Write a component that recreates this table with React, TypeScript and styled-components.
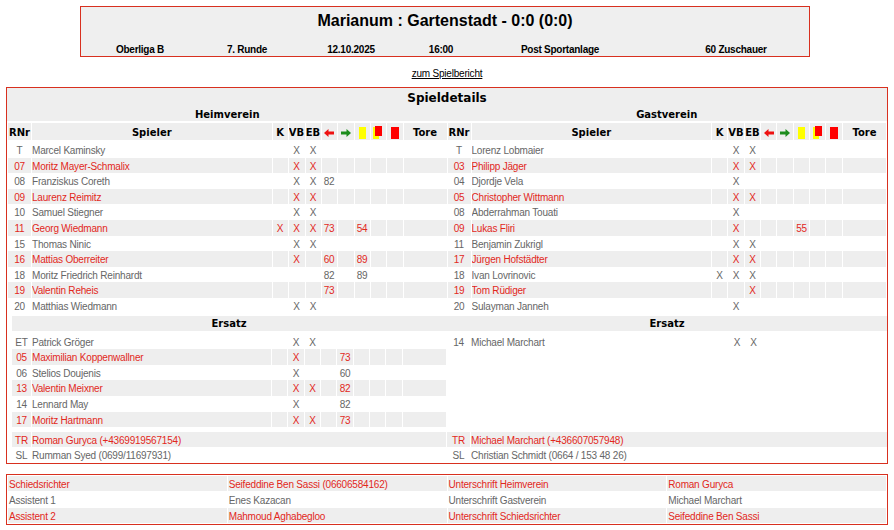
import React from "react";
import styled, { createGlobalStyle } from "styled-components";

const RED = "#e2281c";
const BORDER = "#d8301f";
const GREY_BG = "#eeeeee";
const GREY_TEXT = "#666666";

const GlobalStyle = createGlobalStyle`
  body {
    margin: 0;
    background: #fff;
    font-family: "Liberation Sans", Arial, sans-serif;
    font-size: 10px;
  }
`;

type Player = {
  nr: string;
  name: string;
  k?: boolean;
  vb?: boolean;
  eb?: boolean;
  out?: string;
  inn?: string;
  y?: string;
  yr?: string;
  r?: string;
  tore?: string;
};

const homeStart: Player[] = [
  { nr: "T", name: "Marcel Kaminsky", vb: true, eb: true },
  { nr: "07", name: "Moritz Mayer-Schmalix", vb: true, eb: true },
  { nr: "08", name: "Franziskus Coreth", vb: true, eb: true, out: "82" },
  { nr: "09", name: "Laurenz Reimitz", vb: true, eb: true },
  { nr: "10", name: "Samuel Stiegner", vb: true, eb: true },
  { nr: "11", name: "Georg Wiedmann", k: true, vb: true, eb: true, out: "73", y: "54" },
  { nr: "15", name: "Thomas Ninic", vb: true, eb: true },
  { nr: "16", name: "Mattias Oberreiter", vb: true, out: "60", y: "89" },
  { nr: "18", name: "Moritz Friedrich Reinhardt", out: "82", y: "89" },
  { nr: "19", name: "Valentin Reheis", out: "73" },
  { nr: "20", name: "Matthias Wiedmann", vb: true, eb: true },
];

const awayStart: Player[] = [
  { nr: "T", name: "Lorenz Lobmaier", vb: true, eb: true },
  { nr: "03", name: "Philipp Jäger", vb: true, eb: true },
  { nr: "04", name: "Djordje Vela", vb: true },
  { nr: "05", name: "Christopher Wittmann", vb: true, eb: true },
  { nr: "08", name: "Abderrahman Touati", vb: true },
  { nr: "09", name: "Lukas Fliri", vb: true, y: "55" },
  { nr: "11", name: "Benjamin Zukrigl", vb: true, eb: true },
  { nr: "17", name: "Jürgen Hofstädter", vb: true, eb: true },
  { nr: "18", name: "Ivan Lovrinovic", k: true, vb: true, eb: true },
  { nr: "19", name: "Tom Rüdiger", eb: true },
  { nr: "20", name: "Sulayman Janneh", vb: true },
];

const homeSubs: Player[] = [
  { nr: "ET", name: "Patrick Gröger", vb: true, eb: true },
  { nr: "05", name: "Maximilian Koppenwallner", vb: true, inn: "73" },
  { nr: "06", name: "Stelios Doujenis", vb: true, inn: "60" },
  { nr: "13", name: "Valentin Meixner", vb: true, eb: true, inn: "82" },
  { nr: "14", name: "Lennard May", vb: true, inn: "82" },
  { nr: "17", name: "Moritz Hartmann", vb: true, eb: true, inn: "73" },
];

const awaySubs: Player[] = [{ nr: "14", name: "Michael Marchart", vb: true, eb: true }];

const homeStaff = [
  { role: "TR", name: "Roman Guryca (+4369919567154)" },
  { role: "SL", name: "Rumman Syed (0699/11697931)" },
];
const awayStaff = [
  { role: "TR", name: "Michael Marchart (+436607057948)" },
  { role: "SL", name: "Christian Schmidt (0664 / 153 48 26)" },
];

const officials = [
  ["Schiedsrichter", "Seifeddine Ben Sassi (06606584162)", "Unterschrift Heimverein", "Roman Guryca"],
  ["Assistent 1", "Enes Kazacan", "Unterschrift Gastverein", "Michael Marchart"],
  ["Assistent 2", "Mahmoud Aghabegloo", "Unterschrift Schiedsrichter", "Seifeddine Ben Sassi"],
];

const columns = (rnr: number) =>
  `${rnr}px 1fr 15px 16px 15px 15px 16px 15px 15px 16px 43px`;

const Page = styled.div`
  padding: 6px 6px 0;
`;

const MatchHeader = styled.div`
  width: 728px;
  margin-left: 74px;
  border: 1px solid ${BORDER};
  background: #efefef;
  padding: 4px 0 0;
  display: grid;
  grid-template-rows: 20px 12px;
  row-gap: 13px;
`;

const MatchTitle = styled.h1`
  margin: 0;
  font-size: 16px;
  line-height: 20px;
  font-weight: bold;
  text-align: center;
  color: #000;
`;

const MatchInfo = styled.div`
  display: grid;
  grid-template-columns: 118px 96px 112px 68px 170px 1fr;
  font-weight: bold;
  line-height: 12px;
  letter-spacing: -0.25px;
  text-align: center;
  color: #000;
  & > span:last-child {
    padding-left: 18px;
  }
`;

const LinkLine = styled.div`
  margin: 11px 0 7px;
  line-height: 12px;
  text-align: center;
  letter-spacing: -0.2px;
  a {
    color: #000;
    text-decoration: underline;
  }
`;

const DetailsBox = styled.div`
  border: 1px solid ${BORDER};
  padding-bottom: 1px;
`;

const TitleBand = styled.div`
  background: ${GREY_BG};
  font-family: "DejaVu Sans", Verdana, sans-serif;
  font-weight: bold;
  color: #000;
`;

const BoxTitle = styled.div`
  height: 18px;
  line-height: 20px;
  font-size: 12px;
  text-align: center;
`;

const TeamNames = styled.div`
  display: grid;
  grid-template-columns: 1fr 1fr;
  column-gap: 1px;
  padding: 0 1px;
  height: 15px;
  line-height: 17px;
  font-size: 10px;
  text-align: center;
`;

const TeamGrid = styled.div<{ $inset?: boolean; $top: number }>`
  display: grid;
  grid-template-columns: ${(p) => (p.$inset ? "434px 1fr" : "1fr 1fr")};
  column-gap: 1px;
  margin: ${(p) => `${p.$top}px ${p.$inset ? 0 : 1}px 0 ${p.$inset ? 5 : 1}px`};
  align-items: start;
`;

const SubsBand = styled(TeamGrid)`
  background: ${GREY_BG};
  height: 15px;
  line-height: 15px;
  font-family: "DejaVu Sans", Verdana, sans-serif;
  font-weight: bold;
  text-align: center;
  color: #000;
`;

const Half = styled.div`
  display: flex;
  flex-direction: column;
`;

const HeadRow = styled.div<{ $rnr: number }>`
  display: grid;
  grid-template-columns: ${(p) => columns(p.$rnr)};
  column-gap: 1px;
  height: 17px;
  margin-bottom: 2px;
  font-family: "DejaVu Sans", Verdana, sans-serif;
  font-weight: bold;
  color: #000;
  & > span {
    display: flex;
    align-items: center;
    justify-content: center;
    box-sizing: border-box;
    padding-top: 2px;
    background: ${GREY_BG};
    white-space: nowrap;
    overflow: hidden;
  }
`;

const Row = styled.div<{ $alt: boolean; $cols: string; $h: number }>`
  display: grid;
  grid-template-columns: ${(p) => p.$cols};
  column-gap: 1px;
  height: ${(p) => p.$h}px;
  line-height: ${(p) => p.$h + 2}px;
  letter-spacing: -0.2px;
  color: ${(p) => (p.$alt ? RED : GREY_TEXT)};
  & > span {
    background: ${(p) => (p.$alt ? GREY_BG : "#fff")};
    text-align: center;
    white-space: nowrap;
    overflow: hidden;
  }
  & > span:nth-child(2) {
    text-align: left;
  }
`;

const Card = styled.span<{ $color: string; $w: number }>`
  display: inline-block;
  flex: none;
  width: ${(p) => p.$w}px;
  height: 12px;
  background: ${(p) => p.$color};
`;

const Officials = styled.div`
  margin-top: 10px;
  border: 1px solid ${BORDER};
  padding: 1px;
  display: grid;
  grid-template-columns: repeat(4, 1fr);
  gap: 1px;
`;

const OfficialCell = styled.div<{ $alt: boolean }>`
  height: 15px;
  line-height: 17px;
  padding-left: 1px;
  letter-spacing: -0.2px;
  background: ${(p) => (p.$alt ? GREY_BG : "#fff")};
  color: ${(p) => (p.$alt ? RED : GREY_TEXT)};
  white-space: nowrap;
  overflow: hidden;
`;

const Arrow = ({ dir }: { dir: "in" | "out" }) => (
  <svg width="10" height="8" viewBox="0 0 10 8">
    {dir === "out" ? (
      <path d="M0 4 L4.5 0 L4.5 2.5 L10 2.5 L10 5.5 L4.5 5.5 L4.5 8 Z" fill="#ee1111" />
    ) : (
      <path d="M10 4 L5.5 0 L5.5 2.5 L0 2.5 L0 5.5 L5.5 5.5 L5.5 8 Z" fill="#1c8c1c" />
    )}
  </svg>
);

const YellowRed = () => (
  <svg width="10" height="13" viewBox="0 0 10 13">
    <rect x="0" y="1" width="6" height="12" fill="#ffff00" />
    <rect x="2" y="0" width="7" height="10" fill="#ff0000" />
  </svg>
);

const LineupHead = ({ rnr }: { rnr: number }) => (
  <HeadRow $rnr={rnr}>
    <span>RNr</span>
    <span>Spieler</span>
    <span>K</span>
    <span>VB</span>
    <span>EB</span>
    <span><Arrow dir="out" /></span>
    <span><Arrow dir="in" /></span>
    <span><Card $color="#ffff00" $w={7} /></span>
    <span><YellowRed /></span>
    <span><Card $color="#ff0000" $w={8} /></span>
    <span>Tore</span>
  </HeadRow>
);

const PlayerRows = ({ players, rnr }: { players: Player[]; rnr: number }) => (
  <>
    {players.map((p, i) => (
      <Row key={p.nr + p.name} $alt={i % 2 === 1} $cols={columns(rnr)} $h={15.6}>
        <span>{p.nr}</span>
        <span>{p.name}</span>
        <span>{p.k ? "X" : ""}</span>
        <span>{p.vb ? "X" : ""}</span>
        <span>{p.eb ? "X" : ""}</span>
        <span>{p.out}</span>
        <span>{p.inn}</span>
        <span>{p.y}</span>
        <span>{p.yr}</span>
        <span>{p.r}</span>
        <span>{p.tore}</span>
      </Row>
    ))}
  </>
);

const StaffRows = ({ staff, rnr }: { staff: { role: string; name: string }[]; rnr: number }) => (
  <>
    {staff.map((s, i) => (
      <Row key={s.role} $alt={i === 0} $cols={`${rnr}px 1fr`} $h={15}>
        <span>{s.role}</span>
        <span>{s.name}</span>
      </Row>
    ))}
  </>
);

export default function App() {
  return (
    <Page>
      <GlobalStyle />
      <MatchHeader>
        <MatchTitle>Marianum : Gartenstadt - 0:0 (0:0)</MatchTitle>
        <MatchInfo>
          <span>Oberliga B</span>
          <span>7. Runde</span>
          <span>12.10.2025</span>
          <span>16:00</span>
          <span>Post Sportanlage</span>
          <span>60 Zuschauer</span>
        </MatchInfo>
      </MatchHeader>

      <LinkLine>
        <a href="#">zum Spielbericht</a>
      </LinkLine>

      <DetailsBox>
        <TitleBand>
          <BoxTitle>Spieldetails</BoxTitle>
          <TeamNames>
            <span>Heimverein</span>
            <span>Gastverein</span>
          </TeamNames>
        </TitleBand>

        <TeamGrid $top={2}>
          <Half>
            <LineupHead rnr={23} />
            <PlayerRows players={homeStart} rnr={23} />
          </Half>
          <Half>
            <LineupHead rnr={23} />
            <PlayerRows players={awayStart} rnr={23} />
          </Half>
        </TeamGrid>

        <SubsBand $inset $top={2}>
          <span>Ersatz</span>
          <span>Ersatz</span>
        </SubsBand>

        <TeamGrid $inset $top={3}>
          <Half>
            <PlayerRows players={homeSubs} rnr={19} />
          </Half>
          <Half>
            <PlayerRows players={awaySubs} rnr={23} />
          </Half>
        </TeamGrid>

        <TeamGrid $inset $top={5}>
          <Half>
            <StaffRows staff={homeStaff} rnr={19} />
          </Half>
          <Half>
            <StaffRows staff={awayStaff} rnr={23} />
          </Half>
        </TeamGrid>
      </DetailsBox>

      <Officials>
        {officials.map((row, i) =>
          row.map((cell, j) => (
            <OfficialCell key={`${i}-${j}`} $alt={i % 2 === 0}>
              {cell}
            </OfficialCell>
          ))
        )}
      </Officials>
    </Page>
  );
}
